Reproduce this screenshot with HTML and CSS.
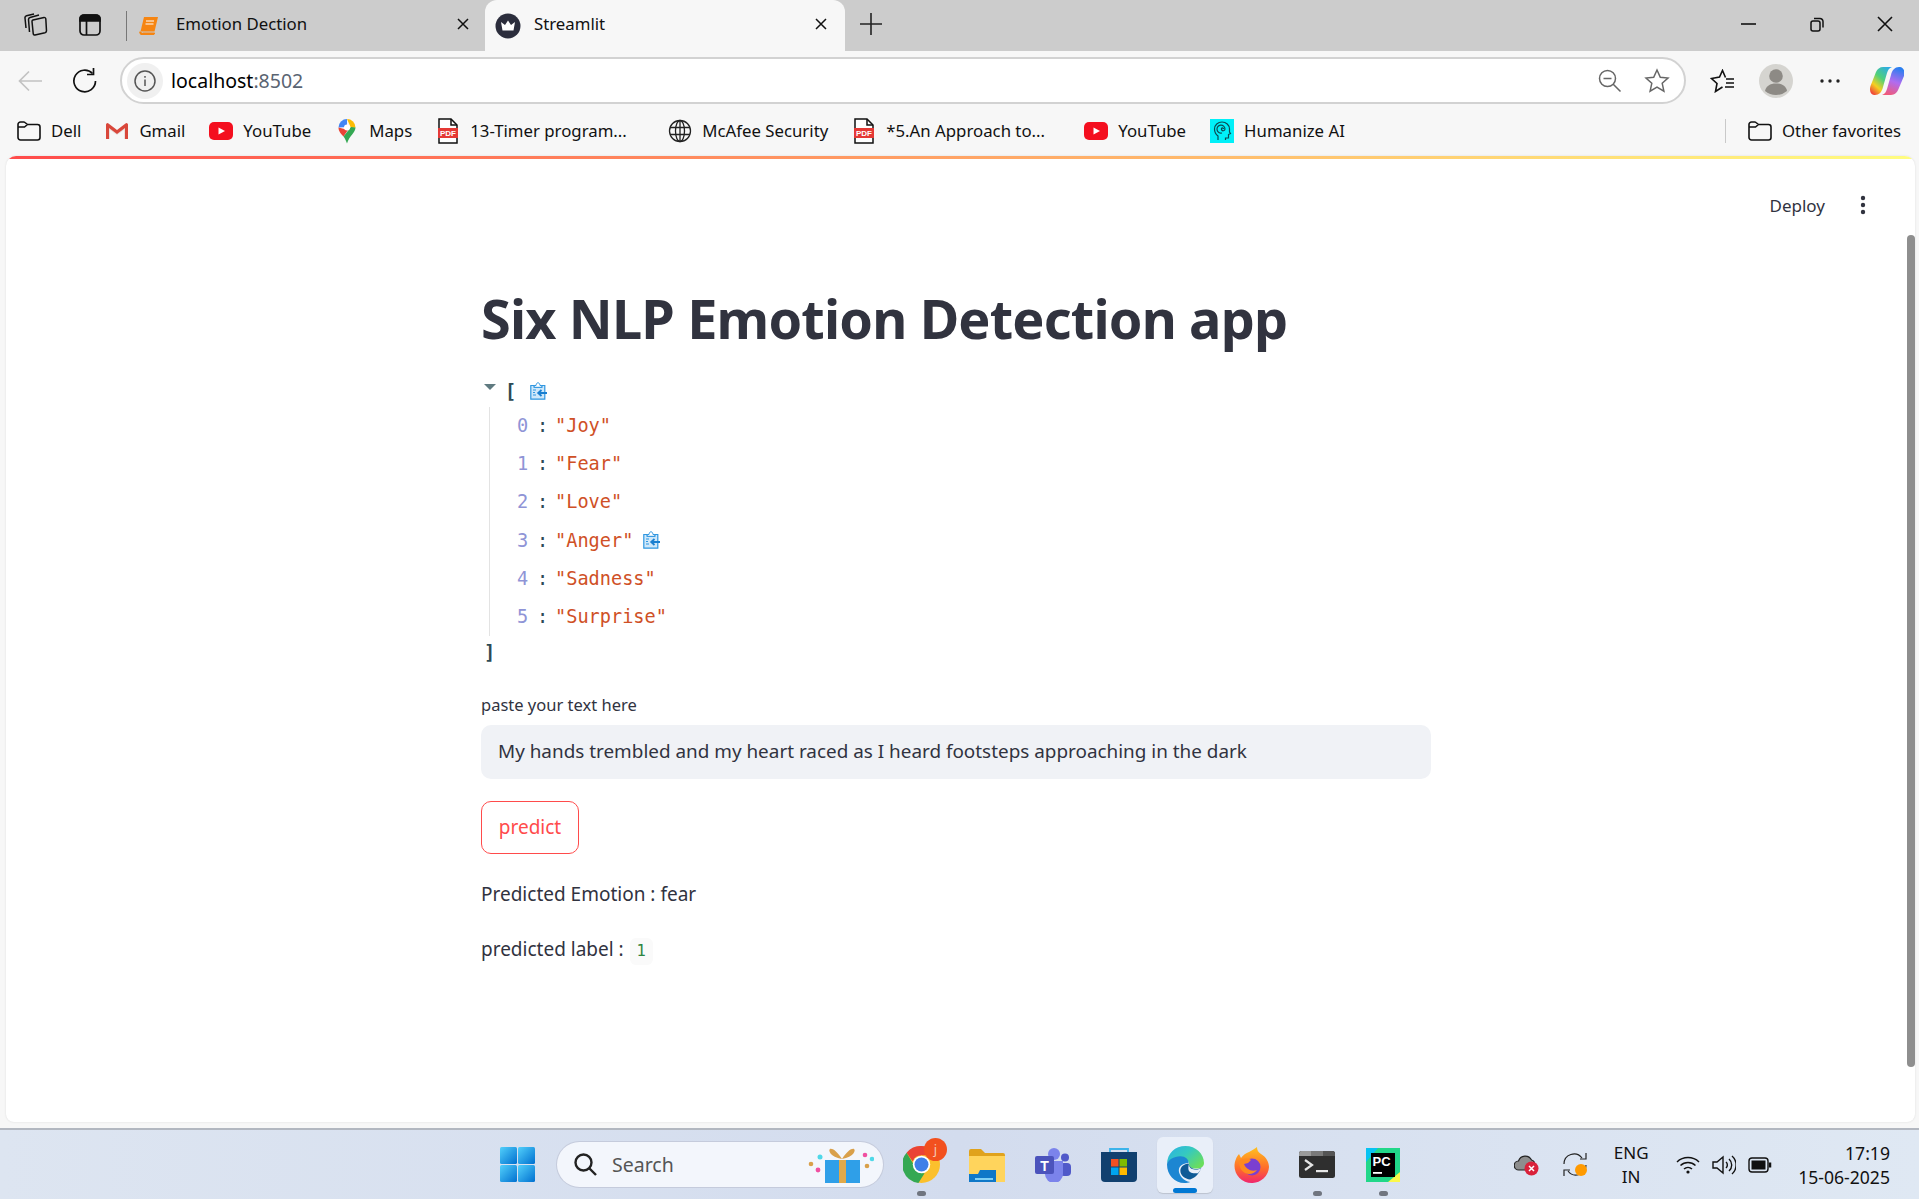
FILE: index.html
```html
<!DOCTYPE html>
<html>

<head>
    <title>Streamlit</title>
    <link rel="stylesheet" href="styles.css">
</head>

<body>
    <svg class="defs" width="0" height="0">
        <defs>
            <symbol id="folder" viewBox="0 0 24 20">
                <path d="M1 5.500V16.500a2.500 2.500 0 0 0 2.500 2.500h17a2.500 2.500 0 0 0 2.500-2.500V6a2.500 2.500 0 0 0-2.500-2.500H10.500L8 1.500a2 2 0 0 0-1.300-.5H3.500A2.500 2.500 0 0 0 1 3.500z M1 6h6.500l3-2.500" fill="none" stroke="#111" stroke-width="1.600" />
            </symbol>
            <symbol id="youtube" viewBox="0 0 24 18">
                <rect x="0" y="0" width="24" height="18" rx="5" fill="#f40f1f" />
                <path d="M9.500 5.500l6.500 3.500-6.500 3.500z" fill="#fff" />
            </symbol>
            <symbol id="pdf" viewBox="0 0 20 26">
                <path d="M1 1h12l6 6v18H1z" fill="#fff" stroke="#111" stroke-width="1.500" />
                <path d="M13 1v6h6" fill="none" stroke="#111" stroke-width="1.500" />
                <rect x="0" y="10" width="20" height="10" fill="#e53935" />
                <text x="10" y="18.300" text-anchor="middle" font-family="Liberation Sans" font-weight="700" font-size="8" fill="#fff">PDF</text>
            </symbol>
            <symbol id="copy" viewBox="0 0 17 18">
                <path d="M.8 3.500h3.400v1.800h7.600V3.500h3v13.700H.8z" fill="#cfe8fa" stroke="#2f96e0" stroke-width="1.200" />
                <path d="M4.200 3.500h1.800C6.300 1.500 7 .8 8 .8s1.700.7 2 2.700h1.800v1.800H4.200z" fill="#fff" stroke="#2f96e0" stroke-width="1" />
                <path d="M3 8h3M3 10.500h2M3 13h3" stroke="#2f96e0" stroke-width="1.200" />
                <path d="M17 11H8.500M11.500 8l-3.300 3 3.300 3" fill="none" stroke="#1a7fd0" stroke-width="1.800" />
            </symbol>
            <linearGradient id="win-grad" x1="0" y1="0" x2="1" y2="1">
                <stop offset="0" stop-color="#52d0fb" />
                <stop offset="1" stop-color="#0070d0" />
            </linearGradient>
            <linearGradient id="edge-a" x1="0" y1="0" x2="1" y2=".7">
                <stop offset="0" stop-color="#2bb0e6" />
                <stop offset=".5" stop-color="#35c9c0" />
                <stop offset="1" stop-color="#6ade5c" />
            </linearGradient>
            <linearGradient id="copilot-a" x1=".9" y1="0" x2=".2" y2="1">
                <stop offset="0" stop-color="#2aa8f0" />
                <stop offset=".45" stop-color="#4fd07a" />
                <stop offset=".75" stop-color="#f5d020" />
                <stop offset="1" stop-color="#f0483a" />
            </linearGradient>
            <linearGradient id="copilot-b" x1=".6" y1="0" x2=".3" y2="1">
                <stop offset="0" stop-color="#2a7ff0" />
                <stop offset=".5" stop-color="#b06cf0" />
                <stop offset="1" stop-color="#f05a7a" />
            </linearGradient>
            <linearGradient id="fox" x1="0" y1="0" x2="0" y2="1">
                <stop offset="0" stop-color="#ffc21f" />
                <stop offset=".6" stop-color="#ff6a2b" />
                <stop offset="1" stop-color="#f0266e" />
            </linearGradient>
        </defs>
    </svg>

    <div class="tabstrip">
        <div class="strip-btn">
            <svg width="24" height="26" viewBox="0 0 24 26" fill="none" stroke="#111" stroke-width="1.500">
                <path d="M9 8l11-2.500a1.500 1.500 0 0 1 1.800 1.300l.7 12a2 2 0 0 1-1.500 2L11 23a1.500 1.500 0 0 1-1.800-1.500L8 9.500A1.500 1.500 0 0 1 9 8z" />
                <path d="M5.500 20L4.500 7.500a2 2 0 0 1 1.500-2L15 3" />
                <path d="M2 16L1 6a2 2 0 0 1 1.500-2.200L10 2" />
            </svg>
        </div>
        <div class="strip-btn">
            <svg width="22" height="22" viewBox="0 0 22 22" fill="none" stroke="#111" stroke-width="1.700">
                <rect x="1" y="1" width="20" height="20" rx="4" />
                <path d="M1 5a4 4 0 0 1 4-4h12a4 4 0 0 1 4 4v2H1z" fill="#111" />
                <path d="M7.500 7v14" />
            </svg>
        </div>
        <div class="strip-divider"></div>
        <div class="tab">
            <svg class="tab-icon" width="20" height="20" viewBox="0 0 20 20">
                <path d="M5 1h14l-3.500 14.500H1.500z" fill="#f68512" />
                <path d="M1 15.500a2 2 0 0 0 2 3h12l.7-1.500H4" fill="#f68512" stroke="#f68512" />
                <path d="M7 5h8M6.500 8h8" stroke="#fff" stroke-width="1" />
            </svg>
            <span class="tab-title">Emotion Dection</span>
            <span class="tab-close">
                <svg width="12" height="12" viewBox="0 0 12 12" stroke="#111" stroke-width="1.500"><path d="M1 1l10 10M11 1L1 11" /></svg>
            </span>
        </div>
        <div class="tab tab-active">
            <svg class="tab-icon" width="26" height="26" viewBox="0 0 26 26">
                <circle cx="13" cy="13" r="12.500" fill="#2b2d3c" />
                <path d="M6 9l4 3 3-4.500 3 4.500 4-3-1.500 8.500h-11z" fill="#fff" />
            </svg>
            <span class="tab-title">Streamlit</span>
            <span class="tab-close">
                <svg width="12" height="12" viewBox="0 0 12 12" stroke="#111" stroke-width="1.500"><path d="M1 1l10 10M11 1L1 11" /></svg>
            </span>
        </div>
        <div class="new-tab">
            <svg width="22" height="22" viewBox="0 0 22 22" stroke="#222" stroke-width="1.600"><path d="M11 0v22M0 11h22" /></svg>
        </div>
        <div class="win-controls">
            <svg width="16" height="16" viewBox="0 0 16 16" stroke="#111" stroke-width="1.600"><path d="M0 8h15" /></svg>
            <svg width="16" height="16" viewBox="0 0 16 16" fill="none" stroke="#111" stroke-width="1.500">
                <rect x="2" y="5" width="9" height="10" rx="2" />
                <path d="M5 2.500h6a3 3 0 0 1 3 3v6" />
            </svg>
            <svg width="16" height="16" viewBox="0 0 16 16" stroke="#111" stroke-width="1.600"><path d="M1 1l14 14M15 1L1 15" /></svg>
        </div>
    </div>

    <div class="toolbar">
        <svg class="tool-back" width="24" height="22" viewBox="0 0 24 22" fill="none" stroke="#c2c2c2" stroke-width="1.700"><path d="M24 11H1.500M11 1.500L1.500 11l9.500 9.500" /></svg>
        <svg class="tool-reload" width="25" height="25" viewBox="0 0 25 25" fill="none" stroke="#111" stroke-width="1.700">
            <path d="M20.500 5.500A10.800 10.800 0 1 0 23.500 13" />
            <path d="M21.500 0v6.500H15" />
        </svg>
        <div class="address">
            <span class="address-info">
                <svg width="22" height="22" viewBox="0 0 22 22" fill="none" stroke="#555" stroke-width="1.500">
                    <circle cx="11" cy="11" r="10" />
                    <path d="M11 9.500v6.500M11 6v1.800" />
                </svg>
            </span>
            <span class="address-text">localhost<span class="address-port">:8502</span></span>
            <svg class="address-zoom" width="24" height="24" viewBox="0 0 24 24" fill="none" stroke="#666" stroke-width="1.500">
                <circle cx="9.500" cy="9.500" r="8" />
                <path d="M5.500 9.500h8M15 15l7.500 7.500" />
            </svg>
            <svg class="address-star" width="26" height="26" viewBox="0 0 26 26" fill="none" stroke="#666" stroke-width="1.500"><path d="M13 2l3.300 7.300 7.700.8-5.800 5.200 1.700 7.900-6.900-4-6.900 4 1.700-7.900L2 10.100l7.700-.8z" /></svg>
        </div>
        <svg class="tool-favs" width="24" height="24" viewBox="0 0 24 24" fill="none" stroke="#111" stroke-width="1.600">
            <path d="M15.500 8.500L12.500 1.500 9.500 8 1.500 9.500 7 14.500 5.500 22.500 12.500 18" />
            <path d="M16 10h8M16 14h8M15 18h9" />
        </svg>
        <svg class="tool-avatar" width="34" height="34" viewBox="0 0 34 34">
            <circle cx="17" cy="17" r="17" fill="#d5d4d0" />
            <circle cx="17" cy="12" r="6.800" fill="#8d8a85" />
            <path d="M6 27c1-5 5-7.500 11-7.500S27 22 28 27a17 17 0 0 1-22 0z" fill="#8d8a85" />
        </svg>
        <svg class="tool-more" width="20" height="4" viewBox="0 0 20 4" fill="#222">
            <circle cx="2" cy="2" r="1.700" /><circle cx="10" cy="2" r="1.700" /><circle cx="18" cy="2" r="1.700" />
        </svg>
        <svg class="tool-copilot" width="34" height="30" viewBox="0 0 34 30">
            <path d="M13 1h9c-3 1-4 3-5 6l-4 14c-1 5-4 8-8 8H4C1 29-1 25 .5 20L6 6c1-3 4-5 7-5z" fill="url(#copilot-a)" />
            <path d="M21 29h-9c3-1 4-3 5-6l4-14c1-5 4-8 8-8h1c3 0 5.500 4 4 9l-5.500 13c-1 3-4 6-7.500 6z" fill="url(#copilot-b)" />
        </svg>
    </div>

    <div class="bookmarks">
        <div class="bm"><svg class="bm-icon" width="24" height="20"><use href="#folder" /></svg>Dell</div>
        <div class="bm">
            <svg class="bm-icon" width="24" height="18" viewBox="0 0 24 18">
                <path d="M1 17V3l11 8 11-8v14h-4V8l-7 5-7-5v9z" fill="#e8e0de" />
                <path d="M1 17V2.500A1.500 1.500 0 0 1 3.500 1.500L12 8l8.500-6.500A1.500 1.500 0 0 1 23 2.500V17h-3V6l-8 6-8-6v11z" fill="#d9473b" />
            </svg>Gmail
        </div>
        <div class="bm"><svg class="bm-icon" width="24" height="18"><use href="#youtube" /></svg>YouTube</div>
        <div class="bm">
            <svg class="bm-icon" width="24" height="26" viewBox="0 0 24 26">
                <path d="M12 1a8.500 8.500 0 0 0-8.500 8.500L12 9z" fill="#4285f4" />
                <path d="M12 1a8.500 8.500 0 0 1 8.500 8.500L16 10z" fill="#fbbc04" />
                <path d="M3.500 9.500c0 4 2.500 6 5 9L13 12z" fill="#ea4335" />
                <path d="M20.500 9.500c0 5-6 8-8.500 16-1-3-2-5-3.500-7L16 9z" fill="#34a853" />
                <circle cx="12" cy="9.500" r="3" fill="#fff" />
            </svg>Maps
        </div>
        <div class="bm bm-long"><svg class="bm-icon" width="24" height="26"><use href="#pdf" /></svg>13-Timer program...</div>
        <div class="bm">
            <svg class="bm-icon" width="24" height="24" viewBox="0 0 24 24" fill="none" stroke="#222" stroke-width="1.300">
                <circle cx="12" cy="12" r="10.500" />
                <ellipse cx="12" cy="12" rx="4.500" ry="10.500" />
                <path d="M2 8.500h20M2 15.500h20M12 1.500v21" />
            </svg>McAfee Security
        </div>
        <div class="bm bm-long"><svg class="bm-icon" width="24" height="26"><use href="#pdf" /></svg>*5.An Approach to...</div>
        <div class="bm"><svg class="bm-icon" width="24" height="18"><use href="#youtube" /></svg>YouTube</div>
        <div class="bm">
            <svg class="bm-icon" width="24" height="24" viewBox="0 0 24 24" fill="none" stroke="#0b4a52" stroke-width="1.200">
                <rect x="0" y="0" width="24" height="24" fill="#00f0f8" stroke="none" />
                <path d="M8 21v-4c-2-1.500-3.500-3.500-3.500-7C4.500 6 8 3 12 3s7.500 3 7.500 7v3l1 1.500-2 1V19h-3v2" />
                <path d="M12 14a4 4 0 1 1 3-4c0 2-3 2.500-3.500 .5s2-2 2-.5" />
            </svg>Humanize AI
        </div>
        <div class="bm-sep"></div>
        <div class="bm bm-other"><svg class="bm-icon" width="24" height="20"><use href="#folder" /></svg>Other favorites</div>
    </div>

    <div class="viewport">
        <div class="rainbow"></div>
        <div class="st-header">
            <span class="deploy">Deploy</span>
            <svg width="6" height="20" viewBox="0 0 6 20" fill="#31333f">
                <circle cx="3" cy="3" r="2.200" /><circle cx="3" cy="10" r="2.200" /><circle cx="3" cy="17" r="2.200" />
            </svg>
        </div>
        <div class="scroll-thumb"></div>

        <div class="block">
            <h1 class="title">Six NLP Emotion Detection app</h1>

            <div class="json">
                <div class="json-open">
                    <span class="json-caret"></span>
                    <span class="json-bracket">[</span>
                    <svg class="copy-icon" width="17" height="18"><use href="#copy" /></svg>
                </div>
                <div class="json-items">
                    <div class="json-row"><span class="json-idx">0</span><span class="json-colon">:</span><span class="json-str">"Joy"</span></div>
                    <div class="json-row"><span class="json-idx">1</span><span class="json-colon">:</span><span class="json-str">"Fear"</span></div>
                    <div class="json-row"><span class="json-idx">2</span><span class="json-colon">:</span><span class="json-str">"Love"</span></div>
                    <div class="json-row"><span class="json-idx">3</span><span class="json-colon">:</span><span class="json-str">"Anger"</span><svg class="copy-row" width="17" height="18"><use href="#copy" /></svg></div>
                    <div class="json-row"><span class="json-idx">4</span><span class="json-colon">:</span><span class="json-str">"Sadness"</span></div>
                    <div class="json-row"><span class="json-idx">5</span><span class="json-colon">:</span><span class="json-str">"Surprise"</span></div>
                </div>
                <div class="json-close">]</div>
            </div>

            <label class="field-label">paste your text here</label>
            <div class="field">My hands trembled and my heart raced as I heard footsteps approaching in the dark</div>
            <div class="predict">predict</div>
            <p class="line">Predicted Emotion : fear</p>
            <p class="line">predicted label : <code class="chip">1</code></p>
        </div>
    </div>

    <div class="taskbar">
        <div class="slot">
            <svg width="35" height="35" viewBox="0 0 35 35" fill="url(#win-grad)">
                <rect width="17" height="17" rx="1.500" /><rect x="18" width="17" height="17" rx="1.500" />
                <rect y="18" width="17" height="17" rx="1.500" /><rect x="18" y="18" width="17" height="17" rx="1.500" />
            </svg>
        </div>
        <div class="search">
            <svg width="23" height="23" viewBox="0 0 23 23" fill="none" stroke="#222" stroke-width="2.400">
                <circle cx="9.500" cy="9.500" r="8" /><path d="M15 15l7 7" />
            </svg>
            <span class="search-text">Search</span>
            <svg class="search-gift" width="66" height="38" viewBox="0 0 66 38">
                <rect x="17" y="14" width="35" height="23" fill="#2f9fe8" />
                <rect x="31" y="14" width="7" height="23" fill="#e0a94a" />
                <path d="M34 13c-5-8-10-11-12-10s0 8 12 10c5-8 10-11 12-10s0 8-12 10z" fill="#d9a04a" />
                <circle cx="3" cy="18" r="2.300" fill="#d9a04a" /><circle cx="12" cy="11" r="2.500" fill="#4fd8e8" />
                <circle cx="10" cy="24" r="2.400" fill="#f04fa0" /><circle cx="57" cy="9" r="2.300" fill="#f04fa0" />
                <circle cx="59" cy="20" r="2.300" fill="#d9a04a" /><circle cx="64" cy="13" r="2.300" fill="#4fd8e8" />
            </svg>
        </div>
        <div class="slot slot-first slot-running">
            <svg width="37" height="37" viewBox="0 0 36 36">
                <circle cx="18" cy="18" r="18" fill="#fbc02d" />
                <path d="M18 0a18 18 0 0 1 15.600 9H18a9 9 0 0 0-8.500 6L3.500 6.500A18 18 0 0 1 18 0z" fill="#ea4335" />
                <path d="M3.500 6.500L11 19a9 9 0 0 0 10 7.500L15 36A18 18 0 0 1 3.500 6.500z" fill="#34a853" />
                <circle cx="18" cy="18" r="8.500" fill="#fff" /><circle cx="18" cy="18" r="6.800" fill="#3f7fe8" />
            </svg>
            <span class="chrome-badge">j</span>
        </div>
        <div class="slot">
            <svg width="36" height="34" viewBox="0 0 36 34">
                <path d="M0 3a2 2 0 0 1 2-2h10l4 4h18a2 2 0 0 1 2 2v25H0z" fill="#e0a21c" />
                <rect y="8" width="36" height="26" fill="#ffd45c" />
                <path d="M0 26h9l2-4h16v12H0z" fill="#0f78c8" />
                <rect x="6" y="30" width="18" height="2" fill="#7fd0f5" />
            </svg>
        </div>
        <div class="slot">
            <svg width="36" height="34" viewBox="0 0 36 34">
                <circle cx="30" cy="9.500" r="4" fill="#5059c9" />
                <rect x="25" y="15" width="11" height="13" rx="4" fill="#5059c9" />
                <circle cx="19" cy="6" r="6" fill="#7b83eb" />
                <path d="M10 13h18v13a9 9 0 0 1-18 0z" fill="#7b83eb" />
                <rect y="8" width="19" height="18" rx="2" fill="#4b53bc" />
                <text x="9.500" y="22.500" text-anchor="middle" font-family="Liberation Sans" font-weight="700" font-size="14" fill="#fff">T</text>
            </svg>
        </div>
        <div class="slot">
            <svg width="36" height="36" viewBox="0 0 36 36">
                <path d="M9 6V2h18v4" fill="none" stroke="#3bb3ea" stroke-width="1.800" />
                <path d="M0 5h36v26a4 4 0 0 1-4 4H4a4 4 0 0 1-4-4z" fill="#11406f" />
                <rect x="10" y="12" width="7.500" height="7.500" fill="#f25022" /><rect x="18.500" y="12" width="7.500" height="7.500" fill="#7fba00" />
                <rect x="10" y="20.500" width="7.500" height="7.500" fill="#00a4ef" /><rect x="18.500" y="20.500" width="7.500" height="7.500" fill="#ffb900" />
            </svg>
        </div>
        <div class="slot slot-active">
            <svg width="37" height="37" viewBox="0 0 36 36">
                <path d="M0 18C0 7 8 0 18 0c10 0 18 7.500 18 16.500 0 3-2.500 5.500-7.500 5.500-5 0-7-1.500-7-4 0-3.500-3.500-6.500-8-6.500-6 0-13.500 2.500-13.500 6.500z" fill="url(#edge-a)" />
                <path d="M0 18c0-4 7-8 13-8 5 0 8 3 8 6.500-4 0-9.500 2-9.500 7 0 5 4.500 10.500 11 11.500-1.500.5-3.500 1-5.500 1C7 36 0 28 0 18z" fill="#1c86d2" />
                <path d="M13 24c0-4 3.500-6.500 8-7 .5 3 3.500 5.500 7.500 5.500 2 0 3.500-.5 5-1.500-2 5-5 10-11 11.500-5-.5-9.500-4-9.500-8.500z" fill="#0f5a96" />
                <path d="M21 18c1 3.500 3 5 7.500 5 2 0 4-.5 5.500-2-1 2-2.500 4-4 5.500-4 .5-8-.5-9-3-.5-2 0-4 0-5.500z" fill="#e9eff9" />
            </svg>
            <span class="active-bar"></span>
        </div>
        <div class="slot">
            <svg width="35" height="36" viewBox="0 0 35 36">
                <path d="M17.500 36A17 17 0 0 1 .5 19C.5 14 3 9 5 7l2 4c2-3 5-5 8-6 3-2 6-3 8-5 0 3 1 5 4 7 5 3 8 8 8 13a17 17 0 0 1-17.500 16z" fill="url(#fox)" />
                <circle cx="18" cy="20" r="8.500" fill="#7b3fd0" />
                <path d="M5 14c4-3 9-3 12-1l-3 3-4 1c2 5 7 8 13 6-3 4-8 5-12 3-4-2-6-7-6-12z" fill="#ff8a1f" />
            </svg>
        </div>
        <div class="slot slot-running">
            <svg width="36" height="27" viewBox="0 0 36 27">
                <rect width="36" height="27" rx="2.500" fill="#2f2f2f" />
                <path d="M0 2.500A2.500 2.500 0 0 1 2.500 0H12v5H0z" fill="#9a9a9a" /><rect x="12" width="12" height="5" fill="#7a7a7a" />
                <path d="M24 0h9.500A2.500 2.500 0 0 1 36 2.500V5H24z" fill="#555" />
                <path d="M6 9l7 5-7 5" fill="none" stroke="#e6e6e6" stroke-width="2.200" />
                <rect x="17" y="19" width="12" height="2.200" fill="#e6e6e6" />
            </svg>
        </div>
        <div class="slot slot-running">
            <svg width="34" height="34" viewBox="0 0 34 34">
                <path d="M0 0h34v34H0z" fill="#21d789" />
                <path d="M34 0v24L22 34h12z" fill="#fcf84a" />
                <path d="M0 0h12L0 14z" fill="#07c3f2" />
                <rect x="5" y="5" width="24" height="24" fill="#000" />
                <text x="6.500" y="18" font-family="Liberation Sans" font-weight="700" font-size="13" fill="#fff">PC</text>
                <rect x="7" y="24" width="9" height="1.800" fill="#fff" />
            </svg>
        </div>

        <div class="tray">
            <svg class="tray-cloud" width="25" height="22" viewBox="0 0 25 22">
                <path d="M5 16a4.500 4.500 0 0 1-.5-9 7 7 0 0 1 13-1 4 4 0 0 1 3 5L14 16z" fill="#8d8d8d" stroke="#222" stroke-width="1.200" />
                <circle cx="17.500" cy="14.500" r="7" fill="#d9213a" />
                <path d="M15 12l5 5M20 12l-5 5" stroke="#fff" stroke-width="1.500" />
            </svg>
            <svg class="tray-sync" width="25" height="25" viewBox="0 0 25 25" fill="none" stroke="#222" stroke-width="1.200">
                <path d="M1 12a10 10 0 0 1 18-6M23 1v6h-6" />
                <path d="M23 13a10 10 0 0 1-18 6M1 24v-6h6" />
                <circle cx="18" cy="18" r="6" fill="#ff9a00" stroke="none" />
            </svg>
            <div class="tray-lang">ENG<br>IN</div>
            <svg class="tray-wifi" width="24" height="20" viewBox="0 0 24 20" fill="none" stroke="#111" stroke-width="1.500">
                <path d="M1 7a16 16 0 0 1 22 0M4.500 10.500a11 11 0 0 1 15 0M8 14a6 6 0 0 1 8 0" />
                <circle cx="12" cy="17" r="1.600" fill="#111" stroke="none" />
            </svg>
            <svg class="tray-icon" width="24" height="22" viewBox="0 0 24 22" fill="none" stroke="#111" stroke-width="1.400">
                <path d="M1 8v6h4l6 5V3L5 8z" /><path d="M14 8a4 4 0 0 1 0 6M17 5a8 8 0 0 1 0 12M20 2a12 12 0 0 1 0 18" />
            </svg>
            <svg class="tray-icon" width="24" height="16" viewBox="0 0 24 16" fill="none" stroke="#111" stroke-width="1.400">
                <rect x="1" y="1" width="19" height="14" rx="3" /><rect x="3.500" y="3.500" width="14" height="9" fill="#111" stroke="none" />
                <path d="M22 5.500v5" stroke-width="2.500" />
            </svg>
            <div class="tray-clock">17:19<br>15-06-2025</div>
        </div>
    </div>
</body>

</html>
```

FILE: styles.css
```css
* {
    box-sizing: border-box;
}

html,
body {
    margin: 0;
    height: 100%;
}

body {
    width: 1919px;
    height: 1199px;
    overflow: hidden;
    display: flex;
    flex-direction: column;
    background: #f7f7f7;
    font-family: "Noto Sans", sans-serif;
    color: #111;
}

.defs {
    position: absolute;
}

svg {
    flex: none;
}

/* browser tabs */
.tabstrip {
    height: 51px;
    display: flex;
    align-items: center;
    padding-left: 9px;
    background: #cccccc;
    font-size: 16.800px;
}

.strip-btn {
    width: 54px;
    display: flex;
    justify-content: center;
    margin-top: -1px;
}

.strip-divider {
    width: 1px;
    height: 30px;
    margin: 0 3px 0 9px;
    background: #777;
}

.tab {
    width: 355px;
    height: 51px;
    display: flex;
    align-items: center;
    padding: 0 16px 0 9px;
}

.tab-icon {
    margin-right: 17px;
}

.tab-title {
    flex: 1;
    margin-top: -4px;
}

.tab-close {
    display: flex;
    margin-top: -4px;
}

.tab-active {
    width: 360px;
    background: #f7f7f7;
    border-radius: 12px 12px 0 0;
    padding: 0 18px 0 10px;
}

.tab-active .tab-icon {
    margin-right: 13px;
}

.new-tab {
    display: flex;
    margin: -4px 0 0 15px;
}

.win-controls {
    margin-left: auto;
    display: flex;
    gap: 52px;
    padding-right: 26px;
    margin-top: -4px;
}

/* address bar */
.toolbar {
    height: 54px;
    display: flex;
    align-items: center;
    padding: 5px 0 0 18px;
}

.tool-back {
    margin-right: 30px;
}

.tool-reload {
    margin-right: 23px;
}

.address {
    width: 1566px;
    height: 47px;
    display: flex;
    align-items: center;
    padding: 0 14px 0 5px;
    background: #fff;
    border: 2px solid #d2d2d2;
    border-radius: 24px;
}

.address-info {
    width: 36px;
    height: 36px;
    display: flex;
    align-items: center;
    justify-content: center;
    border-radius: 50%;
    background: #f0f0f0;
}

.address-text {
    flex: 1;
    margin-left: 8px;
    font-size: 19.500px;
    color: #000;
}

.address-port {
    color: #5a6472;
}

.address-zoom {
    margin-right: 22px;
}

.tool-favs {
    margin-left: 24px;
}

.tool-avatar {
    margin-left: 25px;
}

.tool-more {
    margin-left: 27px;
}

.tool-copilot {
    margin-left: 30px;
}

/* bookmarks */
.bookmarks {
    height: 51px;
    display: flex;
    align-items: center;
    gap: 24px;
    padding: 0 18px 0 17px;
    font-size: 16.800px;
}

.bm {
    display: flex;
    align-items: center;
    gap: 10px;
    white-space: nowrap;
}

.bm-long {
    width: 220px;
}

.bm-long + .bm {
    margin-left: -12px;
}

.bm-sep {
    width: 1px;
    height: 24px;
    margin-left: auto;
    background: #c9c9c9;
}

.bm-other {
    margin-left: -2px;
}

/* streamlit page */
.viewport {
    position: relative;
    height: 966px;
    margin: 0 4px 0 6px;
    background: #fff;
    border-radius: 10px 10px 8px 8px;
    overflow: hidden;
    color: #31333f;
    box-shadow: 0 0 2px #d8d8d8;
}

.rainbow {
    height: 3px;
    background: linear-gradient(90deg, #ff4b4b, #fffd80);
}

.st-header {
    height: 92px;
    display: flex;
    align-items: center;
    justify-content: flex-end;
    gap: 35px;
    padding-right: 49px;
    font-size: 17px;
}

.scroll-thumb {
    position: absolute;
    right: 0;
    top: 79px;
    width: 8px;
    height: 832px;
    border-radius: 4px;
    background: #8e8e8e;
}

.block {
    width: 950px;
    margin-left: 475px;
}

.title {
    margin: 0;
    padding-top: 30.500px;
    font-size: 54px;
    line-height: 72px;
    font-weight: 700;
    letter-spacing: -0.830px;
}

/* json tree */
.json {
    margin-top: 25.500px;
    font-family: "DejaVu Sans Mono", monospace;
    font-size: 18.600px;
    color: #2d4a55;
}

.json-open {
    height: 24px;
    display: flex;
    align-items: center;
}

.json-caret {
    width: 0;
    height: 0;
    margin: -9px 0 0 3px;
    border-left: 6.500px solid transparent;
    border-right: 6.500px solid transparent;
    border-top: 6px solid #5f7a80;
}

.json-bracket {
    margin-left: 9px;
    font-weight: 700;
}

.copy-icon {
    margin-left: 14px;
}

.copy-row {
    margin-left: 10px;
}

.json-items {
    margin: 3.500px 0 0 8px;
    padding-left: 27px;
    border-left: 1px solid #e3e3e3;
}

.json-row {
    height: 38.200px;
    display: flex;
    align-items: center;
}

.json-idx {
    width: 20px;
    color: #8f94d6;
}

.json-colon {
    width: 18px;
}

.json-str {
    color: #cf5026;
}

.json-close {
    height: 24px;
    margin: 5px 0 0 3px;
    font-weight: 700;
    line-height: 24px;
}

/* form */
.field-label {
    display: block;
    margin-top: 27.500px;
    font-size: 16.500px;
    line-height: 26px;
}

.field {
    height: 54px;
    margin-top: 7px;
    padding-left: 17px;
    border-radius: 10px;
    background: #f0f2f6;
    font-size: 18.900px;
    line-height: 53px;
}

.predict {
    width: 98px;
    height: 53px;
    margin-top: 22px;
    border: 1px solid #ff4b4b;
    border-radius: 10px;
    color: #ff4b4b;
    font-size: 19px;
    line-height: 51px;
    text-align: center;
}

.line {
    margin: 23.500px 0 0;
    font-size: 19px;
    line-height: 32px;
}

.chip {
    display: inline-block;
    width: 23px;
    height: 27px;
    margin-left: 1px;
    border-radius: 6px;
    background: #fafafa;
    color: #2e8540;
    font-family: "DejaVu Sans Mono", monospace;
    font-size: 15.500px;
    line-height: 27px;
    text-align: center;
}

/* windows taskbar */
.taskbar {
    height: 71px;
    margin-top: 6px;
    display: flex;
    align-items: center;
    padding-left: 484px;
    border-top: 2px solid #b2b7c0;
    background: linear-gradient(90deg, #dde5f1 0, #d3dcee 50%, #dfe8f3 100%);
}

.slot {
    position: relative;
    width: 66px;
    height: 56px;
    display: flex;
    align-items: center;
    justify-content: center;
    flex: none;
}

.slot-first {
    margin-left: 5px;
}

.slot-running::after {
    content: "";
    position: absolute;
    left: 29px;
    bottom: -3px;
    width: 9px;
    height: 5px;
    border-radius: 3px;
    background: #70757f;
}

.slot-active {
    width: 56px;
    margin: 0 5px;
    border-radius: 6px;
    background: #e9eff9;
    box-shadow: 0 1px 1px #bcc3cf;
}

.active-bar {
    position: absolute;
    left: 16px;
    bottom: 0;
    width: 24px;
    height: 5px;
    border-radius: 3px;
    background: #0078d4;
}

.chrome-badge {
    position: absolute;
    left: 36px;
    top: 1px;
    width: 23px;
    height: 23px;
    border-radius: 50%;
    background: #f2501e;
    color: #f4c9b4;
    font-size: 13px;
    line-height: 22px;
    text-align: center;
}

.search {
    width: 326px;
    height: 45px;
    margin-left: 7px;
    display: flex;
    align-items: center;
    padding-left: 17px;
    border-radius: 23px;
    background: #f3f6fc;
    box-shadow: 0 0 0 1px #c5cbdc;
}

.search-text {
    margin-left: 15px;
    font-size: 19.500px;
    color: #555;
}

.search-gift {
    margin-left: auto;
    margin-right: 9px;
}

.tray {
    margin-left: auto;
    display: flex;
    align-items: center;
    padding-right: 29px;
}

.tray-sync {
    margin-left: 24px;
}

.tray-lang {
    width: 60px;
    margin: 0 0 0 13px;
    font-size: 17px;
    line-height: 24px;
    text-align: center;
}

.tray-wifi {
    margin-left: 15px;
}

.tray-icon {
    margin-left: 12px;
}

.tray-clock {
    margin-left: 26px;
    font-size: 17.600px;
    line-height: 24px;
    text-align: right;
}
```
